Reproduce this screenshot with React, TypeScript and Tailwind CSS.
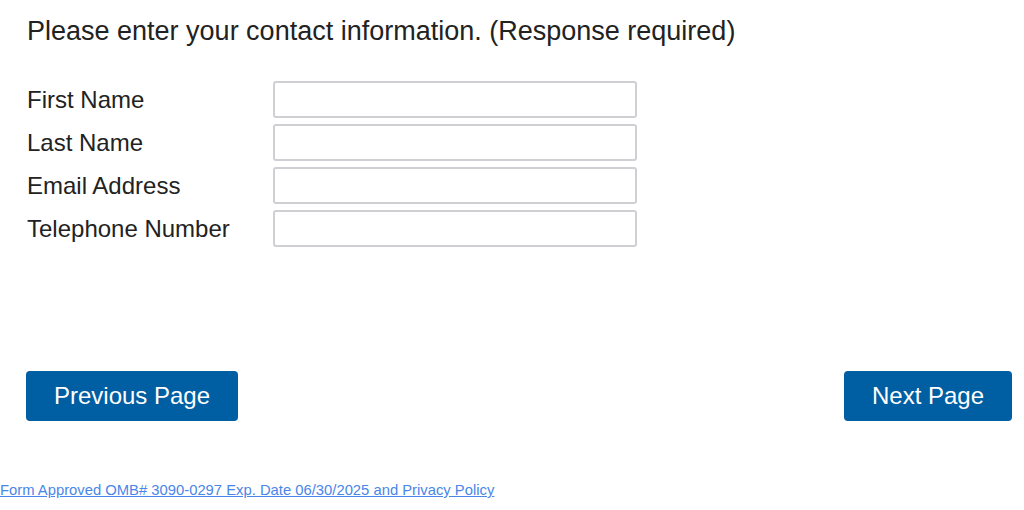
export default function App() {
  const fields = ["First Name", "Last Name", "Email Address", "Telephone Number"];
  return (
    <div className="w-[1024px] h-[510px] bg-white text-[#222] font-['Liberation_Sans',Arial,sans-serif]">
      <div className="pl-[26px] pr-[12px] pt-[14px]">
        <h1 className="text-[27px] leading-[34px] font-normal pl-px">
          Please enter your contact information. (Response required)
        </h1>
        <div className="mt-[33px] flex flex-col gap-[6px]">
          {fields.map((f) => (
            <div key={f} className="flex items-center">
              <label className="w-[247px] pl-px text-[24px] leading-[37px]">{f}</label>
              <input
                type="text"
                className="w-[364px] h-[37px] border-2 border-[#d0d0d4] rounded-[3px] bg-white outline-none"
              />
            </div>
          ))}
        </div>
        <div className="mt-[124px] flex justify-between">
          <button className="h-[50px] w-[212px] rounded-[4px] bg-[#005ea2] text-white text-[24px]">
            Previous Page
          </button>
          <button className="h-[50px] w-[168px] rounded-[4px] bg-[#005ea2] text-white text-[24px]">
            Next Page
          </button>
        </div>
      </div>
      <div className="mt-[57px]">
        <a href="#" className="text-[14.8px] leading-[18px] text-[#4a86e8] underline">
          Form Approved OMB# 3090-0297 Exp. Date 06/30/2025 and Privacy Policy
        </a>
      </div>
    </div>
  );
}
